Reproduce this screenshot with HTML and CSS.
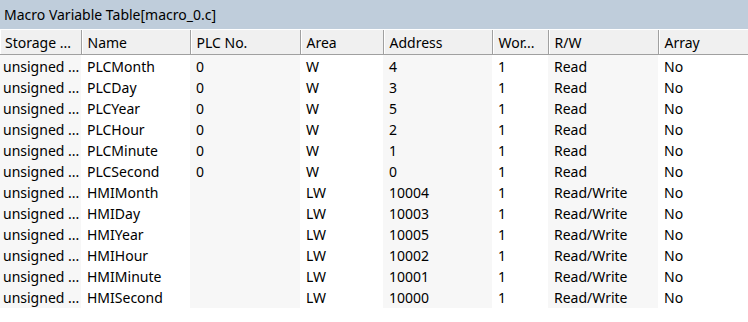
FILE: index.html
```html
<!DOCTYPE html>
<html lang="en">
<head>
  <meta charset="UTF-8">
  <title>Macro Variable Table</title>
  <link rel="stylesheet" href="styles.css">
</head>
<body>
  <div class="title-bar">Macro Variable Table[macro_0.c]</div>

  <table class="var-table">
    <colgroup>
      <col class="c-storage">
      <col class="c-name">
      <col class="c-plc">
      <col class="c-area">
      <col class="c-addr">
      <col class="c-word">
      <col class="c-rw">
      <col class="c-array">
    </colgroup>
    <thead>
      <tr>
        <th>Storage ...</th>
        <th>Name</th>
        <th>PLC No.</th>
        <th>Area</th>
        <th>Address</th>
        <th>Wor...</th>
        <th>R/W</th>
        <th>Array</th>
      </tr>
    </thead>
    <tbody>
      <tr><td>unsigned ...</td><td>PLCMonth</td><td>0</td><td>W</td><td>4</td><td>1</td><td>Read</td><td>No</td></tr>
      <tr><td>unsigned ...</td><td>PLCDay</td><td>0</td><td>W</td><td>3</td><td>1</td><td>Read</td><td>No</td></tr>
      <tr><td>unsigned ...</td><td>PLCYear</td><td>0</td><td>W</td><td>5</td><td>1</td><td>Read</td><td>No</td></tr>
      <tr><td>unsigned ...</td><td>PLCHour</td><td>0</td><td>W</td><td>2</td><td>1</td><td>Read</td><td>No</td></tr>
      <tr><td>unsigned ...</td><td>PLCMinute</td><td>0</td><td>W</td><td>1</td><td>1</td><td>Read</td><td>No</td></tr>
      <tr><td>unsigned ...</td><td>PLCSecond</td><td>0</td><td>W</td><td>0</td><td>1</td><td>Read</td><td>No</td></tr>
      <tr><td>unsigned ...</td><td>HMIMonth</td><td></td><td>LW</td><td>10004</td><td>1</td><td>Read/Write</td><td>No</td></tr>
      <tr><td>unsigned ...</td><td>HMIDay</td><td></td><td>LW</td><td>10003</td><td>1</td><td>Read/Write</td><td>No</td></tr>
      <tr><td>unsigned ...</td><td>HMIYear</td><td></td><td>LW</td><td>10005</td><td>1</td><td>Read/Write</td><td>No</td></tr>
      <tr><td>unsigned ...</td><td>HMIHour</td><td></td><td>LW</td><td>10002</td><td>1</td><td>Read/Write</td><td>No</td></tr>
      <tr><td>unsigned ...</td><td>HMIMinute</td><td></td><td>LW</td><td>10001</td><td>1</td><td>Read/Write</td><td>No</td></tr>
      <tr><td>unsigned ...</td><td>HMISecond</td><td></td><td>LW</td><td>10000</td><td>1</td><td>Read/Write</td><td>No</td></tr>
    </tbody>
  </table>
</body>
</html>
```

FILE: styles.css
```css
* {
  margin: 0;
  padding: 0;
  box-sizing: border-box;
}
body {
  font-family: "Noto Sans", "Open Sans", sans-serif;
  font-size: 14px;
  color: #000;
  background: #fff;
  width: 748px;
  height: 322px;
  overflow: hidden;
}
/* ----- judul ----- */
.title-bar {
  height: 30px;
  line-height: 30px;
  padding-left: 4px;
  background: #bfcddb;
  border-bottom: 1px solid #fff;
}
/* ----- tabel ----- */
.var-table {
  border-collapse: collapse;
  table-layout: fixed;
  width: 748px;
}
.c-storage { width: 81px; }
.c-name { width: 109px; }
.c-plc { width: 110px; }
.c-area { width: 83px; }
.c-addr { width: 109px; }
.c-word { width: 56px; }
.c-rw { width: 110px; }
.c-array { width: 90px; }

.var-table th {
  height: 24px;
  padding: 2px 0 0 6px;
  line-height: 20px;
  text-align: left;
  font-weight: normal;
  white-space: nowrap;
  overflow: hidden;
  background: #f0f0f0;
  border-bottom: 1px solid #a0a0a0;
  border-right: 1px solid #a0a0a0;
  box-shadow: inset 1px 0 0 #fff;
}
.var-table th:first-child {
  padding-left: 5px;
}
.var-table th:last-child {
  border-right: none;
}
.var-table td {
  height: 21px;
  line-height: 20px;
  padding: 0 0 0 6px;
  white-space: nowrap;
  overflow: hidden;
}
.var-table td:first-child {
  padding-left: 3px;
}
/* kolom berselang-seling */
.var-table td:nth-child(odd) {
  background: #f7f7f7;
}
.var-table tbody tr:first-child td {
  padding-top: 2px;
  height: 23px;
}
```
